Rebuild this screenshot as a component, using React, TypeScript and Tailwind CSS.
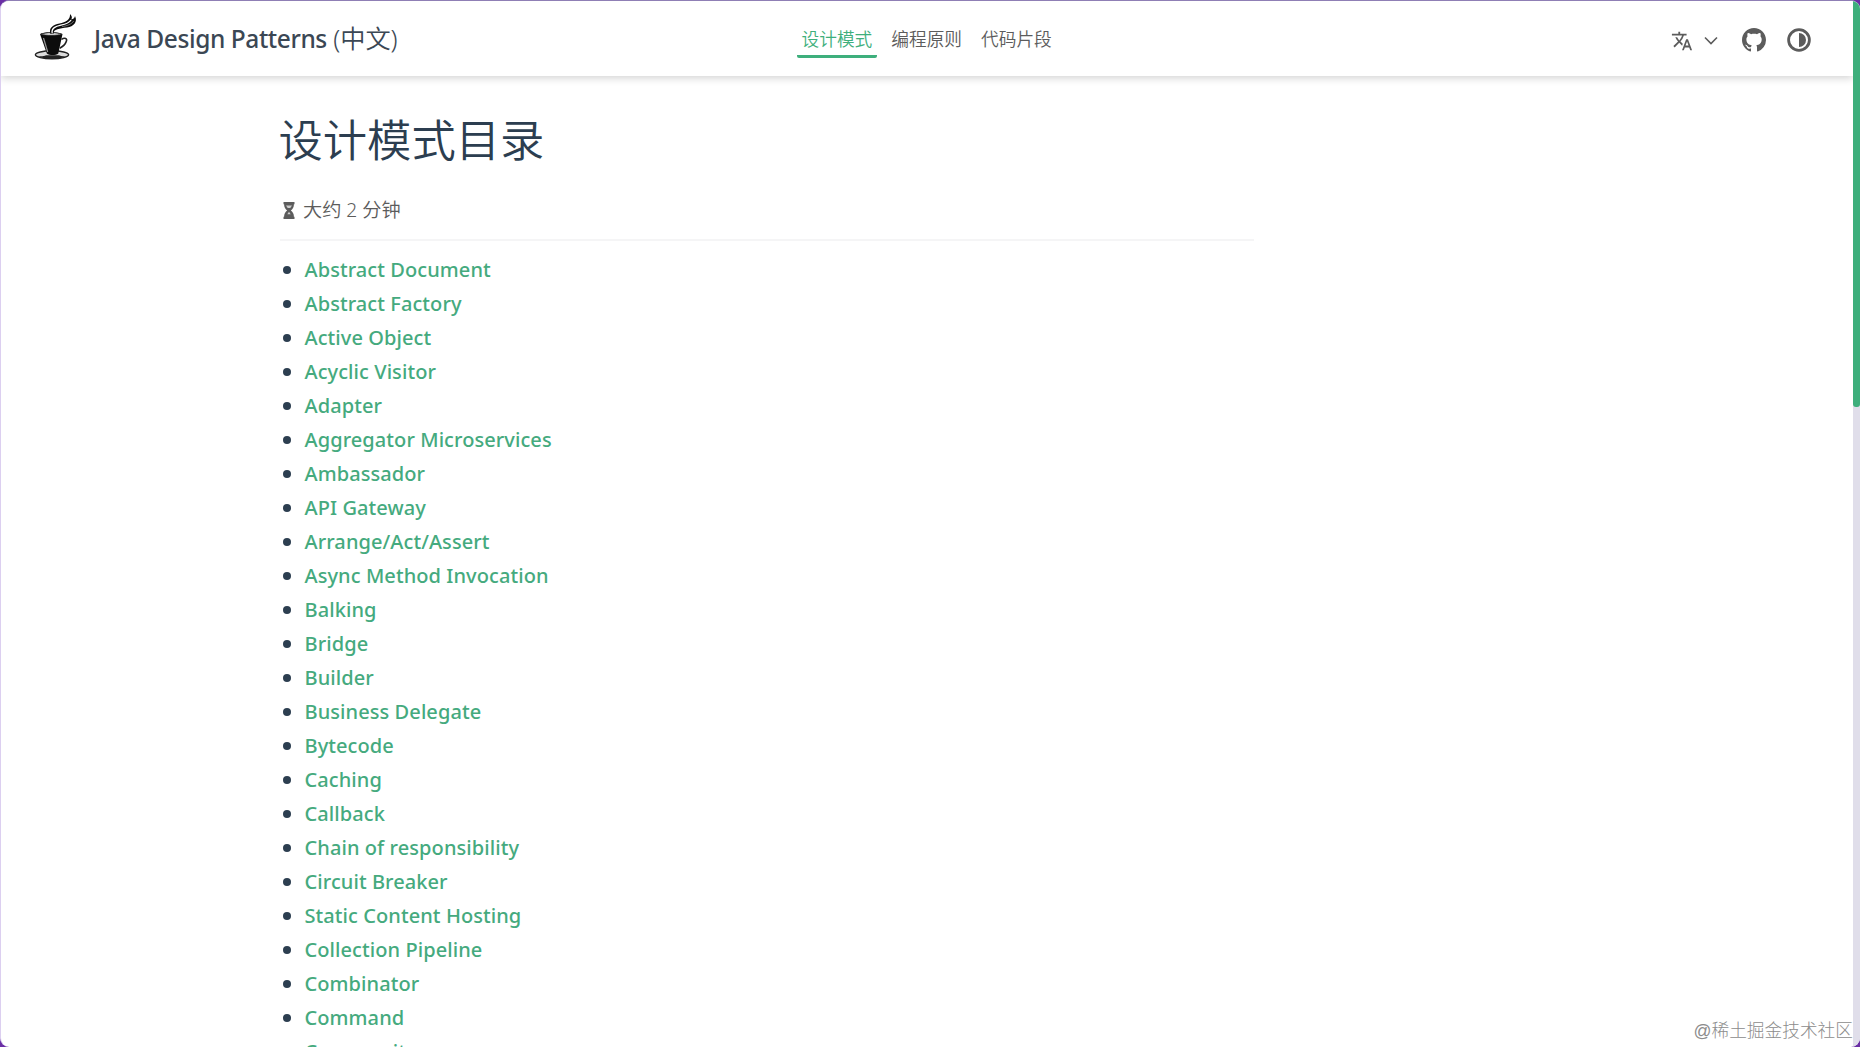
import React from 'react';

interface NavItemProps {
  label: string;
  active?: boolean;
}

const navItems: NavItemProps[] = [
  { label: '设计模式', active: true },
  { label: '编程原则' },
  { label: '代码片段' }
];

const patterns = [
  'Abstract Document',
  'Abstract Factory',
  'Active Object',
  'Acyclic Visitor',
  'Adapter',
  'Aggregator Microservices',
  'Ambassador',
  'API Gateway',
  'Arrange/Act/Assert',
  'Async Method Invocation',
  'Balking',
  'Bridge',
  'Builder',
  'Business Delegate',
  'Bytecode',
  'Caching',
  'Callback',
  'Chain of responsibility',
  'Circuit Breaker',
  'Static Content Hosting',
  'Collection Pipeline',
  'Combinator',
  'Command',
  'Community'
];

function CoffeeLogo() {
  return (
    <svg className="-mt-[3px] h-[48px] w-[44px]" viewBox="0 0 44 48" fill="none">
      <ellipse cx="18" cy="41.8" rx="16.6" ry="4" fill="#ddd" stroke="#222" strokeWidth="1.4" />
      <path d="M4 43c6 4 22 4 28 0-3 .4-5 .2-7-.8H12c-2 1-5 1.2-8 .8z" fill="#222" />
      <path d="M6 21C10 18.500 24 18.500 28.500 21l-4.200 19.600c-2.600 2-8.800 2-11.400 0z" fill="#0c0c0c" />
      <path d="M7 21.200c4-2 17-2 20.500 0-4 1.500-16.500 1.500-20.500 0z" fill="#eee" stroke="#222" strokeWidth=".8" />
      <path d="M9.500 25l4.200 14" stroke="#999" strokeWidth="1.200" />
      <path d="M27.500 26.500c3-2.400 6.500-1.200 4.600 2.400-1.200 3.200-3.800 5-6.400 6.300" stroke="#222" strokeWidth="1.600" />
      <path d="M16.500 21C14.500 14.500 19 12 25.500 10.500 31.500 9 36.500 7 36 1c2.500 2.500 2 4.500 1.200 5.500C39.500 6 41 4.500 41 3c3 6-1.500 10.500-8 11.500-7 1-14 1.500-13.200 6z" fill="#0c0c0c" />
      <path d="M18.200 20.300c-1.200-5.500 4-7 8.700-8.100 4.700-1 8.200-2.200 10.200-5.200" stroke="#fff" strokeWidth="1.300" />
      <path d="M28 13.600c5-.6 10-2.600 11.700-5.600" stroke="#fff" strokeWidth=".4" />
    </svg>
  );
}

function TranslateIcon() {
  return (
    <svg className="h-[22px] w-[22px]" viewBox="0 0 24 24" fill="currentColor">
      <path d="m12.870 15.070-2.540-2.510.030-.030A17.520 17.520 0 0 0 14.070 6H17V4h-7V2H8v2H1v1.990h11.170C11.500 7.920 10.440 9.750 9 11.350 8.070 10.320 7.300 9.190 6.690 8h-2c.730 1.630 1.730 3.170 2.980 4.560l-5.090 5.020L4 19l5-5 3.110 3.110zM18.500 10h-2L12 22h2l1.120-3h4.750L21 22h2zm-2.620 7 1.620-4.330L19.120 17z" />
    </svg>
  );
}

function GithubIcon() {
  return (
    <svg className="h-[24px] w-[24px]" viewBox="0 0 16 16" fill="currentColor">
      <path d="M8 0C3.58 0 0 3.58 0 8c0 3.54 2.29 6.53 5.47 7.59.4.07.55-.17.55-.38 0-.19-.01-.82-.01-1.49-2.01.37-2.53-.49-2.69-.94-.09-.23-.48-.94-.82-1.13-.28-.15-.68-.52-.01-.53.63-.01 1.08.58 1.23.82.72 1.21 1.87.87 2.33.66.07-.52.28-.87.51-1.07-1.78-.2-3.64-.89-3.64-3.95 0-.87.31-1.59.82-2.15-.08-.2-.36-1.02.08-2.12 0 0 .67-.21 2.2.82.64-.18 1.32-.27 2-.27s1.36.09 2 .27c1.53-1.04 2.200-.820 2.200-.820.440 1.100.160 1.920.080 2.120.510.560.820 1.270.820 2.150 0 3.070-1.870 3.750-3.650 3.950.290.250.540.730.540 1.480 0 1.070-.010 1.930-.010 2.200 0 .210.150.460.550.380A8.010 8.010 0 0 0 16 8c0-4.420-3.580-8-8-8z" />
    </svg>
  );
}

function ContrastIcon() {
  return (
    <svg className="h-[24px] w-[24px]" viewBox="0 0 24 24" fill="none">
      <circle cx="12" cy="12" r="10.400" stroke="currentColor" strokeWidth="2.800" />
      <path d="M12 5a7 7 0 0 1 0 14z" fill="currentColor" />
    </svg>
  );
}

function HourglassIcon() {
  return (
    <svg className="h-[17px] w-[12px]" viewBox="0 0 12 17">
      <path d="M.5 0h11v2.200h-.6c0 3-1 4.500-3 6.300 2 1.800 3 3.300 3 6.300h.6V17H.5v-2.200h.6c0-3 1-4.500 3-6.300-2-1.800-3-3.300-3-6.300H.5z" fill="#5c5c5c" />
      <path d="M3 3.400h6L7.300 6H4.700zM6 9.800l1.700 2.400H4.300z" fill="#ccc" />
    </svg>
  );
}

function NavItem({ label, active }: NavItemProps) {
  return (
    <a
      className={`flex h-[38px] items-center border-b-3 px-[4.5px] pt-[4px] text-[17.7px] ${
        active ? 'rounded-b-[2px] border-[#3eaf7c] text-[#3eaf7c]' : 'border-transparent text-[#5c5c5c]'
      }`}
    >
      {label}
    </a>
  );
}

function Navbar() {
  return (
    <header className="flex h-[75px] shrink-0 items-center bg-white pr-[42px] pl-[33px] shadow-[0_2px_8px_rgba(0,0,0,0.18)]">
      <div className="flex w-[763px] items-center gap-[16px]">
        <CoffeeLogo />
        <span className="pt-[1px] text-[24.5px] whitespace-nowrap text-[#3b4754]">
          <span className="font-medium tracking-[-0.42px]">Java Design Patterns</span>{' '}
          <span className="text-[25.2px] font-[350]">(中文)</span>
        </span>
      </div>
      <nav className="flex gap-[10px] font-[350]">
        {navItems.map((item) => (
          <NavItem key={item.label} {...item} />
        ))}
      </nav>
      <div className="ml-auto flex items-center pt-[3px] text-[#5c5c5c]">
        <div className="pt-[2px]">
          <TranslateIcon />
        </div>
        <svg className="mt-[2px] mr-[24px] ml-[11px] h-[10px] w-[14px]" viewBox="0 0 14 10" fill="none" stroke="currentColor" strokeWidth="1.6">
          <path d="M1 1.500l6 6 6-6" />
        </svg>
        <GithubIcon />
        <div className="ml-[21px]">
          <ContrastIcon />
        </div>
      </div>
    </header>
  );
}

export default function App() {
  return (
    <div className="h-[1047px] w-[1860px] overflow-hidden bg-[#6b2fa5] font-['Noto_Sans','Noto_Sans_CJK_SC',sans-serif]">
      <div className="relative flex h-full overflow-hidden rounded-[9px] border-t border-l border-t-[#8f7fb5] border-l-[#dccff0] bg-white">
        <div className="flex w-[1852px] shrink-0 flex-col">
          <Navbar />
          <main className="w-[1253px] pl-[279px]">
            <h1 className="mt-[32px] -ml-[1.5px] text-[44.3px] leading-[64px] font-[350] text-[#2c3e50]">设计模式目录</h1>
            <div className="mt-[21px] flex h-[34px] items-center gap-[8px] pl-[3px] text-[19.2px] font-[350] text-[#5c5c5c]">
              <HourglassIcon />
              <span>大约 2 分钟</span>
            </div>
            <hr className="mt-[12px] border-t-2 border-[#f5f5f6]" />
            <ul className="mt-[12px]">
              {patterns.map((name) => (
                <li key={name} className="flex h-[34px] items-center gap-[13.5px] pl-[3px]">
                  <span className="h-[8px] w-[8px] rounded-full bg-[#2c3e50]" />
                  <a className="text-[20px] leading-[34px] font-[550] tracking-[0.08px] whitespace-nowrap text-[#45aa7e]">
                    {name}
                  </a>
                </li>
              ))}
            </ul>
          </main>
        </div>
        <div className="flex-1 bg-[#e0deea]">
          <div className="h-[406px] rounded-b-[3px] bg-[#3eaf7c]" />
        </div>
        <div className="absolute right-[7px] bottom-[2px] font-['Liberation_Sans','Noto_Sans_CJK_SC',sans-serif] text-[17.7px] font-light whitespace-nowrap text-[#8c8c8c]">
          @稀土掘金技术社区
        </div>
      </div>
    </div>
  );
}
